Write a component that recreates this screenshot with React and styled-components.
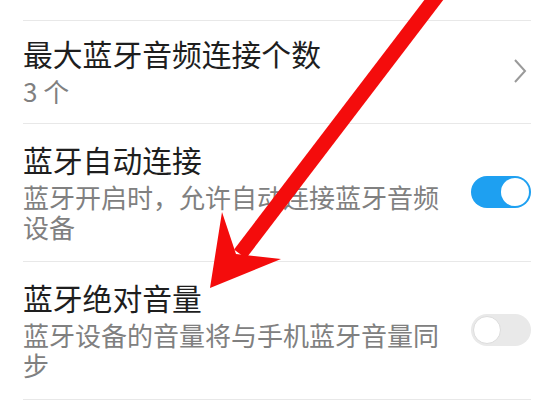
import React from 'react'
import styled, { createGlobalStyle } from 'styled-components'

const GlobalStyle = createGlobalStyle`
  html, body {
    margin: 0;
    padding: 0;
    background: #ffffff;
  }
  body {
    font-family: "Noto Sans CJK SC", "Noto Sans", sans-serif;
    width: 556px;
    height: 400px;
    overflow: hidden;
  }
`

const Page = styled.div`
  position: relative;
  width: 556px;
  height: 400px;
  padding: 20px 25px 0 23px;
  box-sizing: border-box;
  background: #fff;
`

const List = styled.div`
  display: flex;
  flex-direction: column;
  border-top: 1px solid #e8e8e8;
`

const Row = styled.div`
  display: flex;
  align-items: center;
  justify-content: space-between;
  padding: ${({ $compact }) => ($compact ? '14px 0 17px' : '17px 0 19px')};
  border-bottom: 1px solid #e8e8e8;
`

const TextCol = styled.div`
  display: flex;
  flex-direction: column;
  gap: 5px;
  max-width: 430px;
`

const Title = styled.div`
  font-size: 29.8px;
  line-height: 36px;
  color: #1e1e1e;
`

const Sub = styled.div`
  font-size: 26px;
  line-height: 30px;
  color: #808080;
`

const Chevron = styled.svg`
  width: 14px;
  height: 26px;
  margin-right: 4px;
`

const Switch = styled.div`
  position: relative;
  width: 60px;
  height: 32px;
  border-radius: 16px;
  flex-shrink: 0;
  background: ${({ $on }) => ($on ? '#1ea0f1' : '#e9e9e9')};
  &::after {
    content: '';
    position: absolute;
    top: 2px;
    left: ${({ $on }) => ($on ? '30px' : '2px')};
    width: 28px;
    height: 28px;
    border-radius: 50%;
    background: #fff;
    box-sizing: border-box;
    border: ${({ $on }) => ($on ? 'none' : '1px solid #dcdcdc')};
  }
`

const Arrow = styled.svg`
  position: absolute;
  left: 0;
  top: 0;
  pointer-events: none;
`

const rows = [
  { title: '最大蓝牙音频连接个数', sub: '3 个', type: 'link' },
  { title: '蓝牙自动连接', sub: '蓝牙开启时，允许自动连接蓝牙音频设备', type: 'switch', on: true },
  { title: '蓝牙绝对音量', sub: '蓝牙设备的音量将与手机蓝牙音量同步', type: 'switch', on: false }
]

export default function App() {
  return (
    <Page>
      <GlobalStyle />
      <List>
        {rows.map((r) => (
          <Row key={r.title} $compact={r.type === 'link'}>
            <TextCol>
              <Title>{r.title}</Title>
              <Sub>{r.sub}</Sub>
            </TextCol>
            {r.type === 'link' ? (
              <Chevron viewBox="0 0 14 26">
                <path d="M2 2 L12 13 L2 24" fill="none" stroke="#9a9a9a" strokeWidth="2" />
              </Chevron>
            ) : (
              <Switch $on={r.on} />
            )}
          </Row>
        ))}
      </List>
      <Arrow width="556" height="400" viewBox="0 0 556 400">
        <line x1="446" y1="-16" x2="240" y2="254" stroke="#f40c0c" strokeWidth="15" />
        <polygon points="210,288 222,212 236,254 281,259" fill="#f40c0c" />
      </Arrow>
    </Page>
  )
}
